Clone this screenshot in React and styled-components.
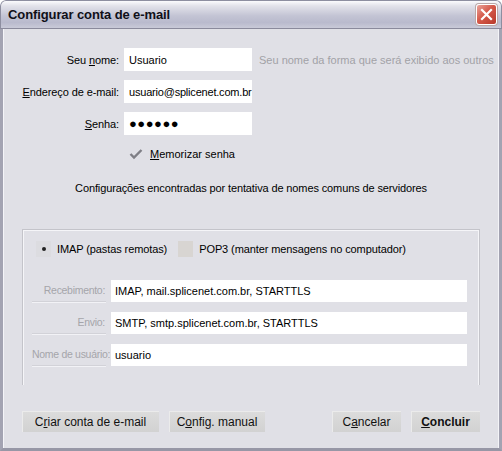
import React from "react";
import styled, { createGlobalStyle } from "styled-components";

const Global = createGlobalStyle`
  html, body {
    margin: 0;
    padding: 0;
    background: #ffffff;
  }
  * { box-sizing: border-box; }
`;

const Window = styled.div`
  width: 502px;
  height: 451px;
  display: flex;
  flex-direction: column;
  font-family: "Liberation Sans", Arial, sans-serif;
  font-size: 11px;
  color: #000;
  border-radius: 6px 6px 0 0;
  overflow: hidden;
  background: #e0e0e6;
`;

const TitleBar = styled.div`
  height: 29px;
  flex: none;
  display: flex;
  align-items: center;
  justify-content: space-between;
  padding: 0 4px 0 7px;
  background: linear-gradient(#fbfbfd 0%, #e2e2ea 18%, #c3c4d4 55%, #b9bacd 80%, #c9cad8 100%);
  border: 1px solid #8d8ea0;
  border-bottom: 1px solid #8a8a9c;
  border-radius: 6px 6px 0 0;
`;

const Title = styled.span`
  font-weight: bold;
  font-size: 13px;
  color: #101018;
  letter-spacing: -0.1px;
`;

const CloseButton = styled.div`
  width: 21px;
  height: 21px;
  border-radius: 3px;
  border: 1px solid #ffffff;
  background: linear-gradient(135deg, #e9a39a 0%, #d5594a 45%, #b8392b 100%);
  display: flex;
  align-items: center;
  justify-content: center;
  box-shadow: 0 0 0 1px #b9a8a8;
`;

const Body = styled.div`
  flex: 1;
  display: flex;
  flex-direction: column;
  border-left: 3px solid #a3a3b2;
  border-right: 3px solid #a3a3b2;
  border-bottom: 3px solid #9797a6;
  box-shadow: inset 1px 0 0 #f4f4f8, inset -1px 0 0 #f4f4f8;
  padding: 19px 0 16px 0;
`;

const FormGrid = styled.div`
  display: grid;
  grid-template-columns: 116px 128px auto;
  column-gap: 5px;
  row-gap: 9px;
  align-items: center;
`;

const Label = styled.label`
  text-align: right;
  white-space: nowrap;
  letter-spacing: -0.1px;
`;

const TextBox = styled.div`
  height: 23px;
  background: #ffffff;
  display: flex;
  align-items: center;
  padding-left: 5px;
  white-space: nowrap;
  overflow: hidden;
  letter-spacing: ${({ $tight }) => ($tight ? "-0.2px" : "0")};
`;

const Dots = styled.span`
  font-size: 13px;
  letter-spacing: 0.5px;
  font-weight: bold;
`;

const Hint = styled.span`
  color: #a2a2a6;
  padding-left: 2px;
  white-space: nowrap;
`;

const CheckRow = styled.div`
  margin: 10px 0 0 123px;
  height: 18px;
  display: flex;
  align-items: center;
  gap: 5px;
`;

const CheckMark = styled.span`
  width: 19px;
  height: 16px;
  display: flex;
  align-items: center;
  justify-content: center;
`;

const Info = styled.p`
  margin: 18px 0 0 0;
  text-align: center;
  line-height: 14px;
  letter-spacing: -0.12px;
`;

const Group = styled.div`
  margin: 34px 19px 0 19px;
  height: 156px;
  border: 1px solid #c4c4ca;
  border-bottom: none;
  box-shadow: inset 1px 1px 0 #f5f5f8, inset -1px 0 0 #f5f5f8;
  padding: 10px 12px 0 13px;
  display: flex;
  flex-direction: column;
`;

const RadioRow = styled.div`
  display: flex;
  align-items: center;
  height: 17px;
  letter-spacing: -0.1px;
`;

const RadioOption = styled.div`
  display: flex;
  align-items: center;
  gap: 6px;
  margin-right: ${({ $gap }) => $gap || 0}px;
`;

const RadioBox = styled.span`
  width: 15px;
  height: 16px;
  background: ${({ $checked }) => ($checked ? "#dcdce0" : "#d8d5d2")};
  display: flex;
  align-items: center;
  justify-content: center;
  &::after {
    content: "";
    display: ${({ $checked }) => ($checked ? "block" : "none")};
    width: 4px;
    height: 4px;
    border-radius: 50%;
    background: #222;
  }
`;

const ServerGrid = styled.div`
  margin-top: 23px;
  display: grid;
  grid-template-columns: 70px 1fr;
  column-gap: 5px;
  row-gap: 10px;
  align-items: center;
`;

const ServerLabel = styled.div`
  text-align: right;
  color: #a5a5aa;
  font-size: 10.5px;
  letter-spacing: -0.3px;
  white-space: nowrap;
  height: 22px;
  line-height: 20px;
  border-bottom: 1px solid #d2d2d8;
  box-shadow: 0 1px 0 #f2f2f6;
  margin-left: -4px;
  padding-right: 1px;
`;

const ServerBox = styled(TextBox)`
  height: 22px;
  padding-left: 4px;
`;

const ButtonRow = styled.div`
  margin-top: auto;
  padding: 0 19px;
  display: flex;
  align-items: center;
  gap: 10px;
`;

const Spacer = styled.div`
  flex: 1;
`;

const Button = styled.button`
  width: ${({ $w }) => $w}px;
  height: 21px;
  padding: 0;
  border: none;
  font-family: inherit;
  font-size: 12px;
  font-weight: ${({ $bold }) => ($bold ? "bold" : "normal")};
  color: #111;
  background: linear-gradient(#dcdcdc, #d2d2d2);
  box-shadow: inset 1px 1px 0 #ebebeb;
`;

const U = styled.span`
  text-decoration: underline;
  text-underline-offset: 1px;
`;

const CloseIcon = () => (
  <svg width="13" height="13" viewBox="0 0 13 13">
    <path d="M2 2 L11 11 M11 2 L2 11" stroke="#fff" strokeWidth="2.2" strokeLinecap="square" />
  </svg>
);

const Check = () => (
  <svg width="14" height="12" viewBox="0 0 14 12">
    <path d="M1.5 6 L5 9.5 L12.5 2" fill="none" stroke="#7f7f86" strokeWidth="2.4" />
  </svg>
);

export default function App() {
  return (
    <>
      <Global />
      <Window>
        <TitleBar>
          <Title>Configurar conta de e-mail</Title>
          <CloseButton>
            <CloseIcon />
          </CloseButton>
        </TitleBar>
        <Body>
          <FormGrid>
            <Label>
              Seu <U>n</U>ome:
            </Label>
            <TextBox>Usuario</TextBox>
            <Hint>Seu nome da forma que será exibido aos outros</Hint>

            <Label>
              <U>E</U>ndereço de e-mail:
            </Label>
            <TextBox $tight>usuario@splicenet.com.br</TextBox>
            <span />

            <Label>
              <U>S</U>enha:
            </Label>
            <TextBox>
              <Dots>●●●●●●</Dots>
            </TextBox>
            <span />
          </FormGrid>

          <CheckRow>
            <CheckMark>
              <Check />
            </CheckMark>
            <span>
              <U>M</U>emorizar senha
            </span>
          </CheckRow>

          <Info>Configurações encontradas por tentativa de nomes comuns de servidores</Info>

          <Group>
            <RadioRow>
              <RadioOption $gap={11}>
                <RadioBox $checked />
                <span>IMAP (pastas remotas)</span>
              </RadioOption>
              <RadioOption>
                <RadioBox />
                <span>POP3 (manter mensagens no computador)</span>
              </RadioOption>
            </RadioRow>

            <ServerGrid>
              <ServerLabel>Recebimento:</ServerLabel>
              <ServerBox>IMAP, mail.splicenet.com.br, STARTTLS</ServerBox>
              <ServerLabel>Envio:</ServerLabel>
              <ServerBox>SMTP, smtp.splicenet.com.br, STARTTLS</ServerBox>
              <ServerLabel>Nome de usuário:</ServerLabel>
              <ServerBox>usuario</ServerBox>
            </ServerGrid>
          </Group>

          <ButtonRow>
            <Button $w={137}>
              C<U>r</U>iar conta de e-mail
            </Button>
            <Button $w={96}>
              C<U>o</U>nfig. manual
            </Button>
            <Spacer />
            <Button $w={69}>
              C<U>a</U>ncelar
            </Button>
            <Button $w={69} $bold>
              <U>C</U>oncluir
            </Button>
          </ButtonRow>
        </Body>
      </Window>
    </>
  );
}
